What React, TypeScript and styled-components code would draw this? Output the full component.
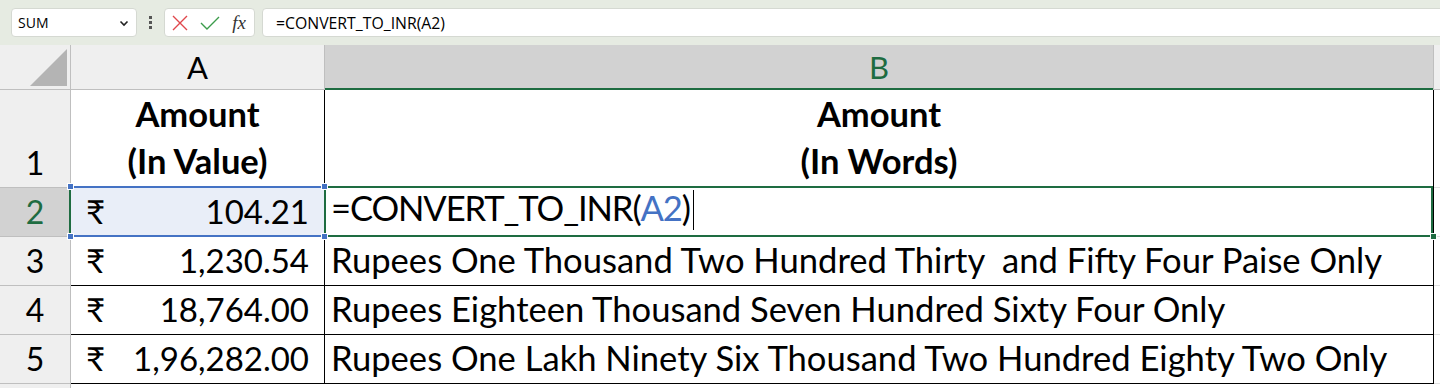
import { ReactNode } from "react";
import styled, { createGlobalStyle, css } from "styled-components";

const GREEN = "#1e6c41";
const BLUE = "#4472c4";
const HEADER_LINE = "#bfbfbf";

const GlobalStyle = createGlobalStyle`
    body {
        margin: 0;
        background: #ffffff;
        font-family: Lato, "Noto Sans", sans-serif;
        color: #000000;
    }
`;

const Page = styled.div`
    width: 1440px;
    height: 388px;
    overflow: hidden;
`;

/* ---------- formula bar ---------- */

const FormulaBar = styled.div`
    height: 45px;
    box-sizing: border-box;
    background: #e6ebe2;
    display: flex;
    align-items: flex-start;
    padding: 8px 0 0 11px;
    font-family: "Open Sans", "Noto Sans", sans-serif;
`;

const Box = styled.div`
    height: 29px;
    box-sizing: border-box;
    background: #ffffff;
    border: 1px solid #d5d9d2;
    border-radius: 4px;
    display: flex;
    align-items: center;
`;

const NameBox = styled(Box)`
    width: 126px;
    padding: 0 6px 0 6px;
    justify-content: space-between;
    font-size: 14px;
`;

const Dots = styled.div`
    width: 27px;
    height: 29px;
    display: flex;
    flex-direction: column;
    align-items: center;
    justify-content: center;
    gap: 2px;

    span {
        width: 3px;
        height: 3px;
        background: #555555;
    }
`;

const IconBox = styled(Box)`
    width: 91px;
    padding: 0 7px;
    justify-content: space-between;
`;

const FxText = styled.span`
    font-family: "Liberation Serif", "DejaVu Serif", serif;
    font-style: italic;
    font-size: 19px;
    color: #333333;
    padding-right: 1px;
`;

const FormulaInput = styled(Box)`
    flex: 1;
    margin-left: 7px;
    margin-right: -10px;
    padding-left: 13px;
    font-size: 15.8px;
`;

/* ---------- grid ---------- */

const Sheet = styled.div`
    display: grid;
    grid-template-columns: 71px 254px 1109px 1fr;
    grid-template-rows: 45px 98px 49px 49px 49px 49px 1fr;
    height: 343px;
`;

const Corner = styled.div`
    background: #efefef;
    border-right: 1px solid ${HEADER_LINE};
    border-bottom: 1px solid ${HEADER_LINE};
    position: relative;

    &::after {
        content: "";
        position: absolute;
        right: 3px;
        bottom: 3px;
        width: 37px;
        height: 37px;
        background: #b4b4b4;
        clip-path: polygon(100% 0, 100% 100%, 0 100%);
    }
`;

const ColHeader = styled.div<{ $selected?: boolean }>`
    background: ${(p) => (p.$selected ? "#d2d2d2" : "#efefef")};
    color: ${(p) => (p.$selected ? GREEN : "#000000")};
    border-right: 1px solid ${HEADER_LINE};
    border-bottom: ${(p) => (p.$selected ? `2px solid ${GREEN}` : `1px solid ${HEADER_LINE}`)};
    display: flex;
    align-items: center;
    justify-content: center;
    font-size: 31px;
    padding-top: ${(p) => (p.$selected ? "1px" : "0")};
`;

const RowHeader = styled.div<{ $selected?: boolean }>`
    background: ${(p) => (p.$selected ? "#d2d2d2" : "#efefef")};
    color: ${(p) => (p.$selected ? GREEN : "#000000")};
    border-right: ${(p) => (p.$selected ? `2px solid ${GREEN}` : `1px solid ${HEADER_LINE}`)};
    border-bottom: 1px solid ${HEADER_LINE};
    display: flex;
    align-items: flex-end;
    justify-content: center;
    font-size: 32px;
    line-height: 38px;
    padding-bottom: 5px;
    padding-left: ${(p) => (p.$selected ? "1px" : "0")};
    box-sizing: border-box;
`;

const Cell = styled.div<{ $align?: "left" | "center" }>`
    position: relative;
    border-right: 1px solid #000000;
    border-bottom: 1px solid #000000;
    display: flex;
    align-items: flex-end;
    justify-content: ${(p) => (p.$align === "center" ? "center" : "flex-start")};
    text-align: ${(p) => p.$align ?? "left"};
    font-size: 34.6px;
    line-height: 38px;
    padding: 0 6px 6px 6px;
    white-space: pre;
    box-sizing: border-box;
`;

const TitleCell = styled(Cell)`
    font-size: 34.5px;
    font-weight: 700;
    line-height: 47px;
    padding-bottom: 3px;
`;

const MoneyCell = styled(Cell)<{ $referenced?: boolean }>`
    justify-content: space-between;
    font-size: 33px;
    padding: 0 15px 6px 15px;

    ${(p) =>
        p.$referenced &&
        css`
            background: #e9eef8;
            &::after {
                content: "";
                position: absolute;
                inset: -2px 0 -1px 0;
                border-top: 2px solid ${BLUE};
                border-bottom: 2px solid ${BLUE};
                pointer-events: none;
            }
        `}
`;

const ActiveCell = styled(Cell)`
    &::after {
        content: "";
        position: absolute;
        inset: -2px 0 -1px -1px;
        border: 2px solid ${GREEN};
        pointer-events: none;
    }
`;

const Formula = styled.span`
    letter-spacing: -1.1px;
`;

const Handle = styled.span<{ $x: "left" | "right"; $y: "top" | "bottom"; $color: string }>`
    position: absolute;
    z-index: 2;
    width: 5px;
    height: 5px;
    background: ${(p) => p.$color};
    border: 1px solid #ffffff;
    ${(p) => (p.$x === "left" ? "left: -4px;" : "right: -4px;")}
    ${(p) => (p.$y === "top" ? "top: -5px;" : "bottom: -4px;")}
`;

const Ref = styled.span`
    color: ${BLUE};
`;

const Caret = styled.span`
    display: inline-block;
    width: 1px;
    height: 40px;
    background: #000000;
    margin-left: 3px;
    vertical-align: -9px;
`;

const Filler = styled.div<{ $header?: boolean }>`
    background: ${(p) => (p.$header ? "#efefef" : "#ffffff")};
    border-bottom: 1px solid ${(p) => (p.$header ? HEADER_LINE : "#e1e1e1")};
    border-left: ${(p) => (p.$header ? "1px solid " + HEADER_LINE : "none")};
    margin-left: ${(p) => (p.$header ? "-1px" : "0")};
`;

type Row = { n: number; amount: string; words: string };

const rows: Row[] = [
    { n: 3, amount: "1,230.54", words: "Rupees One Thousand Two Hundred Thirty  and Fifty Four Paise Only" },
    { n: 4, amount: "18,764.00", words: "Rupees Eighteen Thousand Seven Hundred Sixty Four Only" },
    { n: 5, amount: "1,96,282.00", words: "Rupees One Lakh Ninety Six Thousand Two Hundred Eighty Two Only" },
];

const Money = ({ value, children }: { value: string; children?: ReactNode }) => (
    <>
        <span>₹</span>
        <span>{value}</span>
        {children}
    </>
);

export default function App() {
    return (
        <Page>
            <GlobalStyle />
            <FormulaBar>
                <NameBox>
                    <span>SUM</span>
                    <svg width="12" height="12" viewBox="0 0 12 12">
                        <path d="M2.5 4.5 L6 8 L9.5 4.5" fill="none" stroke="#222" strokeWidth="1.6" />
                    </svg>
                </NameBox>
                <Dots>
                    <span />
                    <span />
                    <span />
                </Dots>
                <IconBox>
                    <svg width="16" height="16" viewBox="0 0 16 16">
                        <path d="M1 1 L15 15 M15 1 L1 15" stroke="#e0474c" strokeWidth="1.4" />
                    </svg>
                    <svg width="20" height="16" viewBox="0 0 20 16">
                        <path d="M1 8 L7 14 L19 2" fill="none" stroke="#3c9c4b" strokeWidth="1.4" />
                    </svg>
                    <FxText>fx</FxText>
                </IconBox>
                <FormulaInput>=CONVERT_TO_INR(A2)</FormulaInput>
            </FormulaBar>

            <Sheet>
                <Corner />
                <ColHeader>A</ColHeader>
                <ColHeader $selected>B</ColHeader>
                <Filler $header />

                <RowHeader>1</RowHeader>
                <TitleCell $align="center">
                    Amount{"\n"}(In Value)
                </TitleCell>
                <TitleCell $align="center">
                    Amount{"\n"}(In Words)
                </TitleCell>
                <Filler />

                <RowHeader $selected>2</RowHeader>
                <MoneyCell $referenced>
                    <Money value="104.21" />
                    <Handle $x="left" $y="top" $color={BLUE} />
                    <Handle $x="right" $y="top" $color={BLUE} />
                    <Handle $x="left" $y="bottom" $color={BLUE} />
                    <Handle $x="right" $y="bottom" $color={BLUE} />
                </MoneyCell>
                <ActiveCell>
                    <Formula>
                        =CONVERT_TO_INR(<Ref>A2</Ref>)<Caret />
                    </Formula>
                    <Handle $x="right" $y="bottom" $color={GREEN} />
                </ActiveCell>
                <Filler />

                {rows.map((r) => (
                    <>
                        <RowHeader key={`h${r.n}`}>{r.n}</RowHeader>
                        <MoneyCell key={`a${r.n}`}>
                            <Money value={r.amount} />
                        </MoneyCell>
                        <Cell key={`b${r.n}`}>{r.words}</Cell>
                        <Filler key={`f${r.n}`} />
                    </>
                ))}

                <RowHeader />
                <Filler />
                <Filler />
                <Filler />
            </Sheet>
        </Page>
    );
}
